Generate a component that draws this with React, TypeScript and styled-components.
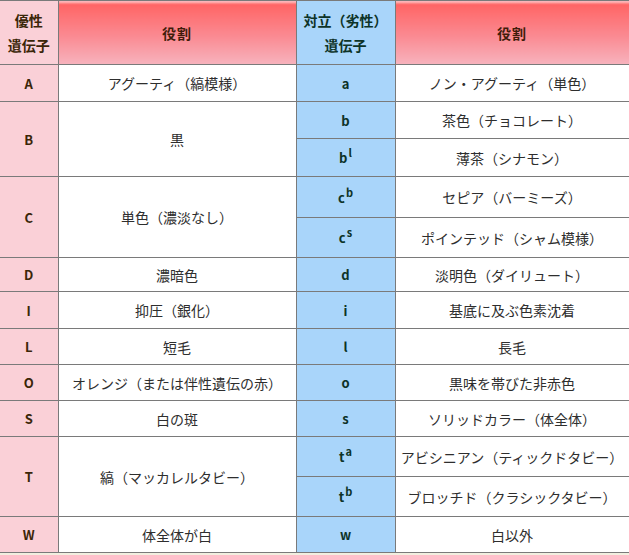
import React from 'react';
import styled, { createGlobalStyle } from 'styled-components';

const GlobalStyle = createGlobalStyle`
  html, body {
    margin: 0;
    padding: 0;
    background: #f2efe0;
  }
  body {
    font-family: "Noto Sans CJK JP", "Noto Sans", sans-serif;
    color: #333;
  }
`;

const Table = styled.table`
  border-collapse: collapse;
  table-layout: fixed;
  width: 629px;
  font-size: 14px;
  border-top: 1px solid #8a8a8a;
  border-right: 1px solid #8a8a8a;
  border-bottom: 1px solid #8a8a8a;
`;

const Col = styled.col<{ $w: number }>`
  width: ${({ $w }) => `${$w}px`};
`;

const Cell = styled.td<{ $h?: number }>`
  border: 1px solid #7a7a7a;
  padding: 0;
  text-align: center;
  vertical-align: middle;
  height: ${({ $h }) => ($h ? `${$h}px` : 'auto')};
  box-sizing: border-box;
`;

const DominantCell = styled(Cell)`
  background: #fad0d7;
  color: #3a2608;
  font-weight: bold;
  font-size: 13px;
  border-left: none;
`;

const RecessiveCell = styled(Cell)`
  background: #a9d5fa;
  color: #0d3328;
  font-weight: bold;
  font-size: 13px;
`;

const RoleCell = styled(Cell)`
  background: #ffffff;
  color: #2e2e2e;
`;

const HeadPlain = styled.th<{ $tone: 'pink' | 'blue' }>`
  border: 1px solid #7a7a7a;
  border-left: ${({ $tone }) => ($tone === 'pink' ? 'none' : '1px solid #7a7a7a')};
  background: ${({ $tone }) => ($tone === 'pink' ? '#fad0d7' : '#a9d5fa')};
  color: ${({ $tone }) => ($tone === 'pink' ? '#3a2608' : '#0d3328')};
  font-weight: bold;
  font-size: 14px;
  line-height: 25px;
  padding: 0;
  height: 63px;
`;

const HeadRole = styled.th`
  border: 1px solid #7a7a7a;
  background: linear-gradient(to bottom, #ffc4c4 0px, #ff6565 3px, #fa8a92 55%, #f7b3bd 100%);
  color: #3f1c0a;
  font-weight: bold;
  font-size: 14px;
  padding: 0;
  letter-spacing: 1px;
`;

const Sup = styled.sup`
  font-size: 11px;
  vertical-align: 6px;
  line-height: 0;
  margin-left: 1px;
`;

type Sub = { gene: string; sup?: string; role: string; h: number };
type Row = { dom: string; role: string; subs: Sub[] };

const rows: Row[] = [
  { dom: 'A', role: 'アグーティ（縞模様）', subs: [{ gene: 'a', role: 'ノン・アグーティ（単色）', h: 37 }] },
  {
    dom: 'B',
    role: '黒',
    subs: [
      { gene: 'b', role: '茶色（チョコレート）', h: 37 },
      { gene: 'b', sup: 'l', role: '薄茶（シナモン）', h: 38 },
    ],
  },
  {
    dom: 'C',
    role: '単色（濃淡なし）',
    subs: [
      { gene: 'c', sup: 'b', role: 'セピア（バーミーズ）', h: 41 },
      { gene: 'c', sup: 's', role: 'ポインテッド（シャム模様）', h: 40 },
    ],
  },
  { dom: 'D', role: '濃暗色', subs: [{ gene: 'd', role: '淡明色（ダイリュート）', h: 34 }] },
  { dom: 'I', role: '抑圧（銀化）', subs: [{ gene: 'i', role: '基底に及ぶ色素沈着', h: 37 }] },
  { dom: 'L', role: '短毛', subs: [{ gene: 'l', role: '長毛', h: 36 }] },
  { dom: 'O', role: 'オレンジ（または伴性遺伝の赤）', subs: [{ gene: 'o', role: '黒味を帯びた非赤色', h: 36 }] },
  { dom: 'S', role: '白の斑', subs: [{ gene: 's', role: 'ソリッドカラー（体全体）', h: 36 }] },
  {
    dom: 'T',
    role: '縞（マッカレルタビー）',
    subs: [
      { gene: 't', sup: 'a', role: 'アビシニアン（ティックドタビー）', h: 40 },
      { gene: 't', sup: 'b', role: 'ブロッチド（クラシックタビー）', h: 40 },
    ],
  },
  { dom: 'W', role: '体全体が白', subs: [{ gene: 'w', role: '白以外', h: 36 }] },
];

export default function App() {
  return (
    <>
      <GlobalStyle />
      <Table>
        <colgroup>
          <Col $w={58} />
          <Col $w={238} />
          <Col $w={99} />
          <Col $w={234} />
        </colgroup>
        <thead>
          <tr>
            <HeadPlain $tone="pink">
              優性
              <br />
              遺伝子
            </HeadPlain>
            <HeadRole>役割</HeadRole>
            <HeadPlain $tone="blue">
              対立（劣性）
              <br />
              遺伝子
            </HeadPlain>
            <HeadRole>役割</HeadRole>
          </tr>
        </thead>
        <tbody>
          {rows.map(row =>
            row.subs.map((sub, i) => (
              <tr key={`${row.dom}-${i}`}>
                {i === 0 && <DominantCell rowSpan={row.subs.length}>{row.dom}</DominantCell>}
                {i === 0 && <RoleCell rowSpan={row.subs.length}>{row.role}</RoleCell>}
                <RecessiveCell $h={sub.h}>
                  {sub.gene}
                  {sub.sup && <Sup>{sub.sup}</Sup>}
                </RecessiveCell>
                <RoleCell $h={sub.h}>{sub.role}</RoleCell>
              </tr>
            )),
          )}
        </tbody>
      </Table>
    </>
  );
}
